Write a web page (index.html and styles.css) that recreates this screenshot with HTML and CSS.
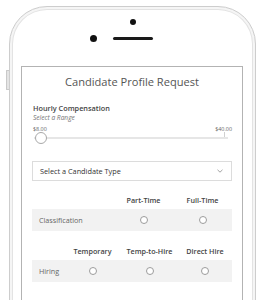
FILE: index.html
```html
<!DOCTYPE html>
<html>
<head>
<meta charset="utf-8">
<link rel="stylesheet" href="styles.css">
</head>
<body>
<div class="phone">
  <span class="side-btn"></span>
  <div class="phone-top">
    <span class="camera"></span>
    <div class="sensor-row">
      <span class="sensor"></span>
      <span class="speaker"></span>
      <span class="spacer"></span>
    </div>
  </div>
  <div class="screen">
    <h1 class="title">Candidate Profile Request</h1>
    <div class="field-label">Hourly Compensation</div>
    <div class="field-hint">Select a Range</div>
    <div class="range">
      <div class="range-labels">
        <span class="tick-label">$8.00</span>
        <span class="tick-label">$40.00</span>
      </div>
      <div class="track"><span class="handle"></span></div>
    </div>
    <div class="select">
      <span>Select a Candidate Type</span>
      <svg class="chev" width="6" height="4" viewBox="0 0 6 4"><polyline points="0.5,0.8 3,3.2 5.5,0.8" fill="none" stroke="#8a8a8a" stroke-width="0.8"/></svg>
    </div>

    <div class="opt-table two">
      <div class="head"><span></span><span>Part-Time</span><span>Full-Time</span></div>
      <div class="row"><span class="lbl">Classification</span><span class="cell"><i class="radio"></i></span><span class="cell"><i class="radio"></i></span></div>
    </div>

    <div class="opt-table three">
      <div class="head"><span></span><span>Temporary</span><span>Temp-to-Hire</span><span>Direct Hire</span></div>
      <div class="row"><span class="lbl">Hiring</span><span class="cell"><i class="radio"></i></span><span class="cell"><i class="radio"></i></span><span class="cell"><i class="radio"></i></span></div>
    </div>

    <div class="opt-table edu">
      <div class="head"><span></span><span>High School</span><span>College</span><span>Graduate</span></div>
      <div class="row"><span class="lbl">Education</span><span class="cell"><i class="radio"></i></span><span class="cell"><i class="radio"></i></span><span class="cell"><i class="radio"></i></span></div>
    </div>
  </div>
</div>
</body>
</html>
```
FILE: styles.css
```css
* { box-sizing: border-box; }
html, body { margin: 0; padding: 0; background: #fff; height: 300px; overflow: hidden; }
body { font-family: "Open Sans", "Liberation Sans", sans-serif; }

.phone {
  position: relative;
  margin: 6px 0 0 9px;
  width: 247px;
  height: 560px;
  border: 1px solid #cdcdcd;
  border-radius: 38px;
  background: #fff;
  box-shadow: inset 0 0 0 2px #f5f5f5, inset 0 0 0 3px #e3e3e3;
}
.side-btn {
  position: absolute;
  left: -4px;
  top: 63px;
  width: 3px;
  height: 20px;
  background: #e4e4e4;
  border: 1px solid #c9c9c9;
  border-right: none;
  border-radius: 1px 0 0 1px;
}
.phone-top {
  height: 59px;
  display: flex;
  flex-direction: column;
  align-items: center;
  padding-top: 12px;
}
.camera {
  width: 6px; height: 6px; border-radius: 50%;
  background: #111;
}
.sensor-row {
  margin-top: 10px;
  height: 7px;
  display: flex;
  align-items: center;
  gap: 16px;
}
.sensor { width: 7px; height: 7px; border-radius: 50%; background: #111; }
.speaker { width: 40px; height: 3px; border-radius: 2px; background: #1a1a1a; }
.spacer { width: 7px; height: 7px; }

.screen {
  margin-left: 11px;
  width: 222px;
  height: 500px;
  border: 1px solid #b3b3b3;
  background: #fff;
  padding: 7px 10px 0 10px;
  overflow: hidden;
}
.title {
  margin: 0 0 14px;
  font-size: 11.1px;
  line-height: 15px;
  font-weight: 400;
  color: #555;
  text-align: center;
}
.field-label {
  font-size: 7.3px;
  line-height: 10px;
  font-weight: 600;
  color: #444;
  padding-left: 1px;
}
.field-hint {
  font-size: 6.6px;
  line-height: 9px;
  font-style: italic;
  color: #777;
  padding-left: 1px;
}
.range { margin-top: 4px; }
.range-labels {
  display: flex;
  justify-content: space-between;
  padding: 0 0 0 1px;
}
.tick-label {
  position: relative;
  font-size: 5.4px;
  line-height: 7px;
  color: #666;
}
.tick-label::after {
  content: "";
  position: absolute;
  left: 50%;
  top: 6px;
  width: 1px;
  height: 5px;
  background: #d0d0d0;
}
.track {
  position: relative;
  margin: 4px 4px 0 2px;
  height: 2px;
  background: #e6e6e6;
}
.handle {
  position: absolute;
  left: 1px;
  top: -5px;
  width: 12px;
  height: 12px;
  border-radius: 50%;
  background: #fff;
  border: 1px solid #a9a9a9;
}
.select {
  margin-top: 22px;
  height: 20px;
  border: 1px solid #dcdcdc;
  display: flex;
  align-items: center;
  justify-content: space-between;
  padding: 0 8px 0 7px;
  font-size: 7.3px;
  color: #333;
}
.chev { display: block; }

.opt-table { margin-top: 13px; }
.opt-table + .opt-table { margin-top: 14px; }
.head, .row {
  display: grid;
  align-items: center;
}
.two .head, .two .row { grid-template-columns: 82px 59px 59px; }
.three .head, .three .row, .edu .head, .edu .row { grid-template-columns: 32px 57px 57px 54px; }
.edu .head, .edu .row { grid-template-columns: 58px 46px 48px 48px; }
.head {
  height: 12px;
  font-size: 7.2px;
  font-weight: 600;
  color: #444;
  text-align: center;
  white-space: nowrap;
}
.row {
  margin-top: 3px;
  height: 22px;
  background: #f2f2f2;
  font-size: 7.2px;
  color: #666;
}
.lbl { padding-left: 7px; }
.cell { display: flex; justify-content: center; }
.radio {
  display: block;
  width: 8px;
  height: 8px;
  border-radius: 50%;
  border: 1px solid #9c9c9c;
  background: #fff;
}
```
